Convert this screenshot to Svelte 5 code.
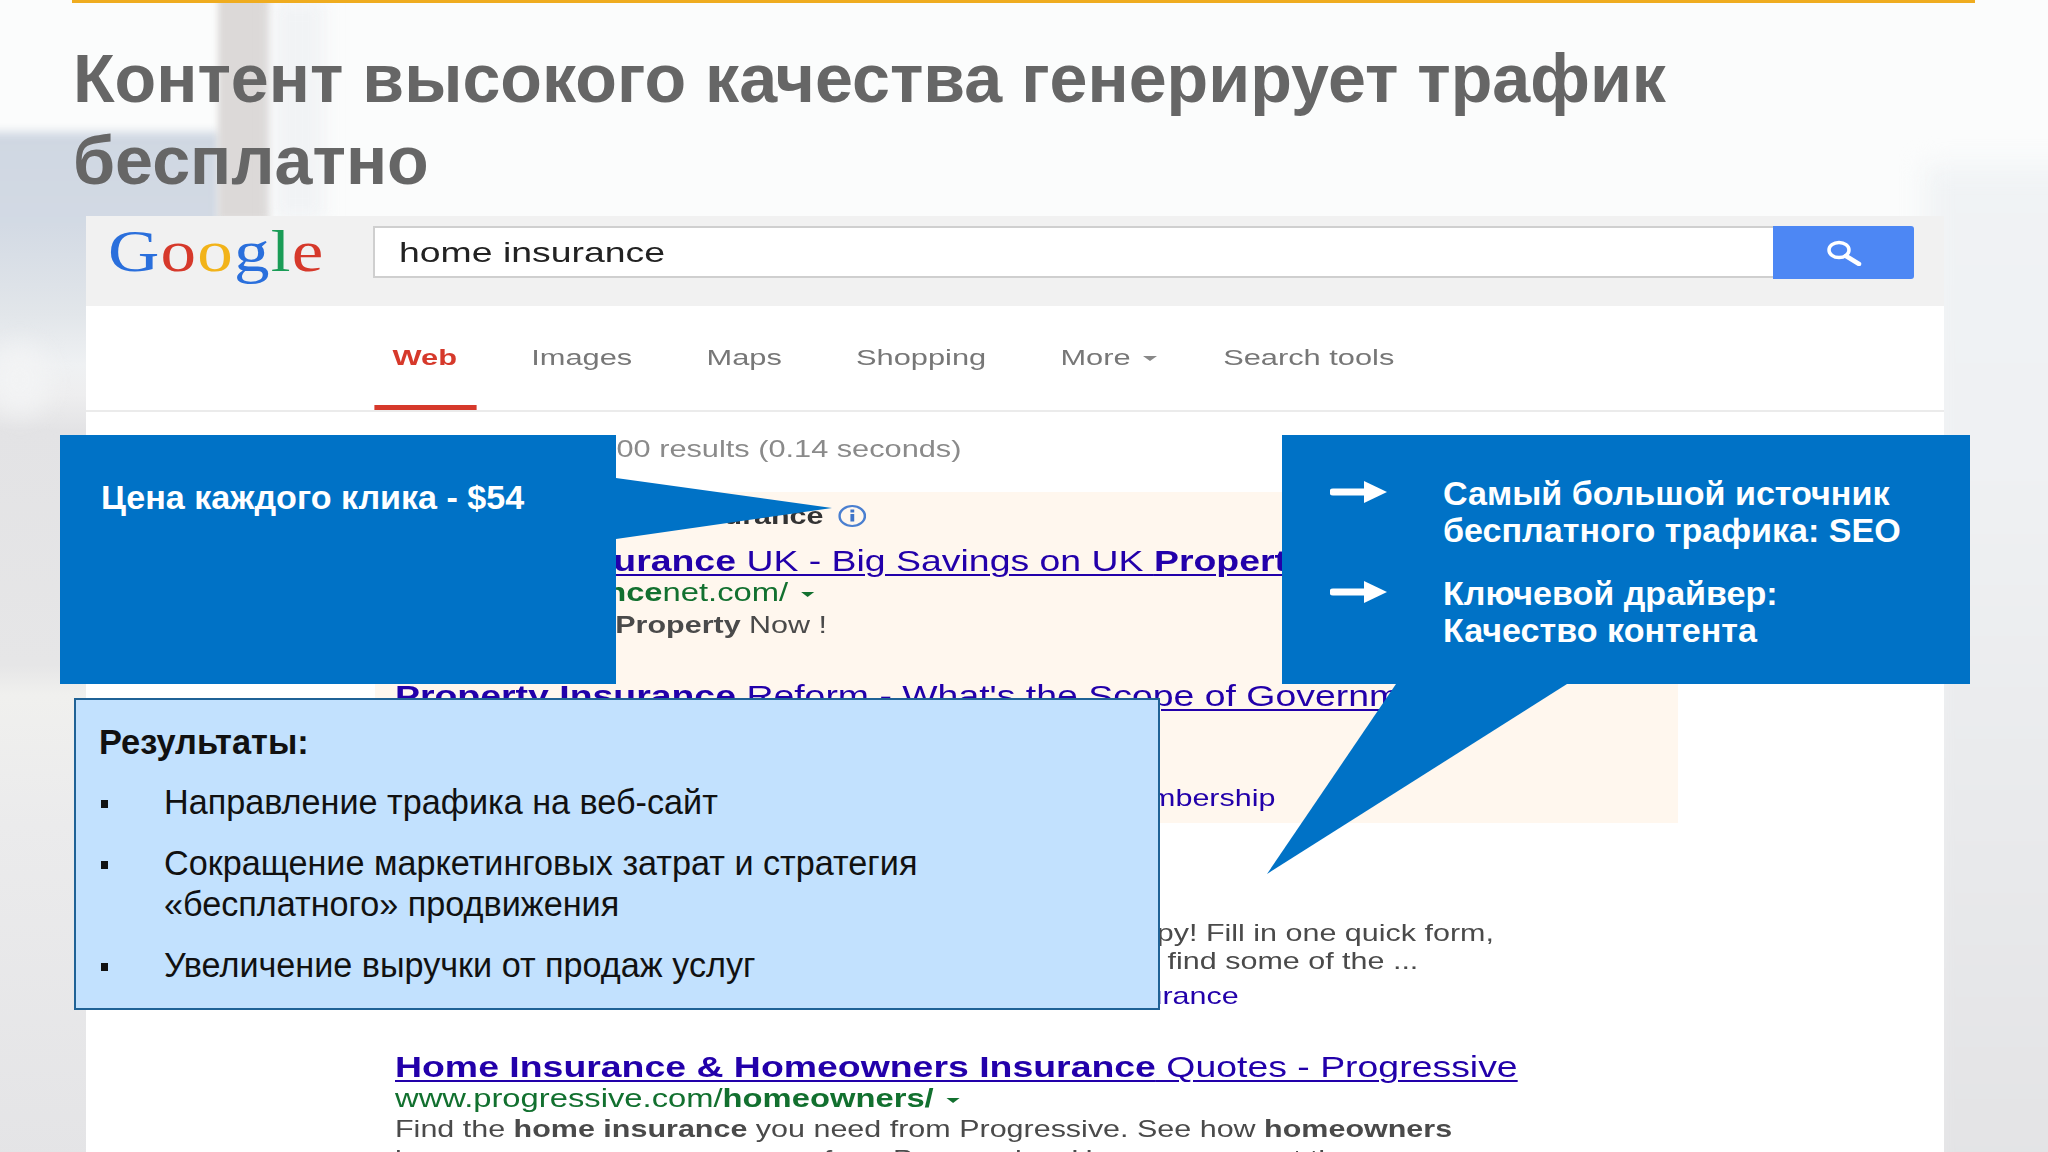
<script>
  const tabs = ['Images', 'Maps', 'Shopping'];
  const results = [
    'Направление трафика на веб-сайт',
    'Сокращение маркетинговых затрат и стратегия «бесплатного» продвижения',
    'Увеличение выручки от продаж услуг'
  ];
</script>

<div class="slide">
  <div class="photo">
    <span class="block"></span>
    <span class="pillar"></span>
    <span class="glow"></span>
    <span class="side"></span>
    <span class="blob"></span>
    <span class="right"></span>
  </div>

  <div class="rule"></div>
  <h1>Контент высокого качества генерирует трафик<br />бесплатно</h1>

  <div class="shot">
    <div class="masthead">
      <div class="logo">
        <span class="word"><span class="blue">G</span><span class="red">o</span><span class="yellow">o</span><span class="blue">g</span><span class="green">l</span><span class="red">e</span></span>
      </div>
      <div class="query"><span>home insurance</span></div>
      <div class="go">
        <svg width="36" height="26" viewBox="0 0 36 26">
          <ellipse cx="13" cy="10" rx="10" ry="7.5" fill="none" stroke="#fff" stroke-width="3.5" />
          <path d="M20 16 L33 24" stroke="#fff" stroke-width="4.5" stroke-linecap="round" />
        </svg>
      </div>
    </div>

    <nav class="tabs">
      <div class="tab-row">
        <span class="tab active">Web</span>
        {#each tabs as t}
          <span class="tab">{t}</span>
        {/each}
        <span class="tab">More <i class="caret gray"></i></span>
        <span class="tab last">Search tools</span>
      </div>
    </nav>

    <div class="stats">About 120,000,000 results (0.14 seconds)</div>

    <div class="ads">
      <div class="col">
        <div class="line snip adlabel"><b>Ad related to home insurance</b>
          <svg class="info" width="22" height="26" viewBox="0 0 22 26">
            <ellipse cx="11" cy="13" rx="10" ry="10" fill="none" stroke="#4a7fd0" stroke-width="2" />
            <rect x="9.6" y="11" width="3" height="7.5" fill="#3f74c8" />
            <rect x="9.6" y="6.5" width="3" height="3" fill="#3f74c8" />
          </svg>
        </div>
        <div class="line title"><a><b>Property Insurance</b> UK - Big Savings on UK <b>Property Insurance</b></a></div>
        <div class="line url">www.uk<b>insurance</b>net.com/ <i class="caret"></i></div>
        <div class="line snip">Save Money on <b>Property</b> Now !</div>
        <div class="line title second"><a><b>Property Insurance</b> Reform - What's the Scope of Government</a></div>
        <div class="line url">www.rstreet.org/<b>insurance</b>/ <i class="caret"></i></div>
        <div class="line snip">Join the debate on <b>property insurance</b> reform today</div>
        <div class="line link">Sign Up Today for a Free Year of R Street Insurance Membership</div>
      </div>
    </div>

    <div class="col organic">
      <div class="line title"><a><b>Home Insurance</b> Quotes</a></div>
      <div class="line snip first">Compare UK <b>home insurance</b> and save money. Be happy! Fill in one quick form,</div>
      <div class="line snip tight">then compare cheap quotes from insurers and you might find some of the ...</div>
      <div class="line link sub">Cheap UK Car Insurance - Travel Insurance - Home Insurance</div>
      <div class="line title second"><a><b>Home Insurance &amp; Homeowners Insurance</b> Quotes - Progressive</a></div>
      <div class="line url">www.progressive.com/<b>homeowners/</b> <i class="caret"></i></div>
      <div class="line snip close">Find the <b>home insurance</b> you need from Progressive. See how <b>homeowners</b></div>
      <div class="line snip next">insurance can save you money from Progressive. Homeowners get the coverage</div>
    </div>
  </div>

  <div class="panel">
    <h2>Результаты:</h2>
    <ul>
      {#each results as r}
        <li>{r}</li>
      {/each}
    </ul>
  </div>

  <div class="callout cost">
    <p>Цена каждого клика - $54</p>
    <svg class="tail" width="220" height="66" viewBox="0 0 220 66">
      <polygon points="0,2 216,32 0,63" fill="#0072c6" />
    </svg>
  </div>

  <div class="callout source">
    <div class="point">
      <svg width="58" height="24" viewBox="0 0 58 24">
        <path d="M3 12 H36" stroke="#fff" stroke-width="7" stroke-linecap="round" />
        <polygon points="34,1 57,12 34,23" fill="#fff" />
      </svg>
      <p>Самый большой источник<br />бесплатного трафика: SEO</p>
    </div>
    <div class="point">
      <svg width="58" height="24" viewBox="0 0 58 24">
        <path d="M3 12 H36" stroke="#fff" stroke-width="7" stroke-linecap="round" />
        <polygon points="34,1 57,12 34,23" fill="#fff" />
      </svg>
      <p>Ключевой драйвер:<br />Качество контента</p>
    </div>
    <svg class="tail" width="304" height="192" viewBox="0 0 304 192">
      <polygon points="129,0 300,0 0,190" fill="#0072c6" />
    </svg>
  </div>
</div>

<style>
  :global(body) {
    margin: 0;
    background: #fff;
  }

  .slide {
    position: relative;
    width: 2048px;
    height: 1152px;
    overflow: hidden;
    background: #fbfcfc;
    font-family: "Liberation Sans", Arial, sans-serif;
  }

  .photo {
    position: absolute;
    inset: 0;
    overflow: hidden;
  }
  .photo span {
    position: absolute;
    display: block;
  }
  .pillar {
    left: 218px;
    top: -10px;
    width: 52px;
    height: 230px;
    background: #dcd9d8;
    filter: blur(3px);
  }
  .glow {
    left: 274px;
    top: 0;
    width: 50px;
    height: 220px;
    background: #f1f3f5;
    filter: blur(9px);
  }
  .block {
    left: -20px;
    top: 132px;
    width: 240px;
    height: 110px;
    background: linear-gradient(#cfd7e2, #d3dae4);
    filter: blur(5px);
  }
  .side {
    left: -20px;
    top: 225px;
    width: 106px;
    height: 940px;
    background: linear-gradient(#d3dae4 0, #e2e6ea 90px, #eff1f3 140px, #eeeeef 170px, #e3e3e5 205px, #e6e6e7 440px, #f0f0ee 470px, #ebebec 600px, #e4e4e6 100%);
  }
  .blob {
    left: -10px;
    top: 345px;
    width: 60px;
    height: 70px;
    border-radius: 50%;
    background: #f2f3f4;
    filter: blur(12px);
  }
  .right {
    left: 1925px;
    top: 165px;
    width: 160px;
    height: 1020px;
    background: linear-gradient(#f0f3f5, #eff1f3 300px, #e3e3e5 100%);
    filter: blur(12px);
  }

  .rule {
    position: relative;
    height: 3px;
    margin: 0 73px 0 72px;
    background: #efac1f;
  }

  h1 {
    position: relative;
    margin: 34px 0 15px 73px;
    font-size: 68.2px;
    line-height: 82px;
    font-weight: 700;
    color: #666;
  }

  .shot {
    position: relative;
    width: 1858px;
    height: 936px;
    margin-left: 86px;
    background: #fff;
    overflow: hidden;
    filter: blur(0.6px);
  }

  .masthead {
    display: flex;
    align-items: flex-start;
    height: 90px;
    background: #f1f1f1;
  }
  .logo {
    width: 287px;
    padding-left: 22px;
    box-sizing: border-box;
    font-family: "Liberation Serif", serif;
    font-size: 60px;
    line-height: 71px;
    letter-spacing: 1px;
    white-space: nowrap;
  }
  .word {
    display: inline-block;
    transform: scaleX(1.185);
    transform-origin: 0 0;
  }
  .blue { color: #2a6fdc; }
  .red { color: #d6392b; }
  .yellow { color: #f2b319; }
  .green { color: #1a9c56; }

  .query {
    width: 1400px;
    height: 52px;
    margin-top: 10px;
    box-sizing: border-box;
    padding-left: 24px;
    background: #fff;
    border: 2px solid #cfcfcf;
    border-right: 0;
    font-size: 28px;
    line-height: 50px;
    color: #222;
  }
  .query span {
    display: inline-block;
    transform: scaleX(1.335);
    transform-origin: 0 0;
  }
  .go {
    display: flex;
    align-items: center;
    justify-content: center;
    width: 141px;
    height: 53px;
    margin-top: 10px;
    background: #4d87f4;
    border-radius: 0 3px 3px 0;
  }

  .tabs {
    height: 104px;
    border-bottom: 2px solid #ebebeb;
  }
  .tab-row {
    display: flex;
    width: 1200px;
    padding-left: 219px;
    box-sizing: border-box;
    transform: scaleX(1.4);
    transform-origin: 0 0;
    font-size: 22px;
    line-height: 104px;
    color: #777;
  }
  .tab {
    position: relative;
    margin-left: 53px;
    white-space: nowrap;
  }
  .tab.active {
    margin-left: 0;
    font-weight: 700;
    color: #d6392b;
  }
  .tab.active::after {
    content: "";
    position: absolute;
    left: -13px;
    right: -14px;
    bottom: 0;
    height: 5px;
    background: #d6392b;
  }
  .tab.last {
    margin-left: 47px;
  }

  .caret {
    display: inline-block;
    margin-left: 3px;
    vertical-align: 4px;
    border-top: 5px solid #12702f;
    border-left: 5px solid transparent;
    border-right: 5px solid transparent;
  }
  .caret.gray {
    border-top-color: #888;
  }

  .stats {
    height: 30px;
    margin-top: 22px;
    margin-left: 305px;
    font-size: 24px;
    line-height: 30px;
    color: #8a8a8a;
    white-space: nowrap;
    transform: scaleX(1.28);
    transform-origin: 0 0;
  }

  .ads {
    width: 1303px;
    margin-top: 28px;
    margin-left: 289px;
    padding: 6px 0 10px;
    background: #fff7ee;
  }
  .col {
    width: 1200px;
    margin-left: 20px;
  }
  .organic {
    margin-left: 309px;
    margin-top: 47px;
  }

  .line {
    height: 30px;
    line-height: 30px;
    white-space: nowrap;
    font-size: 24px;
    color: #4a4a4a;
    transform-origin: 0 0;
  }
  .adlabel b {
    color: #333;
  }
  .info {
    position: relative;
    top: 5px;
    margin-left: 5px;
  }
  .title {
    margin-top: 18px;
    font-size: 29px;
    color: #2200aa;
    transform: scaleX(1.29);
  }
  .title a {
    text-decoration: underline;
    text-decoration-thickness: 2px;
    text-underline-offset: 3px;
  }
  .title.second {
    margin-top: 41px;
  }
  .organic .title:first-child {
    margin-top: 0;
  }
  .url {
    margin-top: 1px;
    font-size: 25px;
    color: #12702f;
    transform: scaleX(1.31);
  }
  .snip {
    margin-top: 3px;
    transform: scaleX(1.27);
  }
  .snip.adlabel {
    margin-top: 0;
  }
  .snip.first {
    margin-top: 18px;
  }
  .snip.tight {
    margin-top: -2px;
  }
  .snip.close {
    margin-top: 1px;
  }
  .snip.next {
    margin-top: 0;
  }
  .link {
    margin-top: 8px;
    color: #2200aa;
    transform: scaleX(1.27);
  }
  .link.sub {
    margin-top: 5px;
  }

  .panel {
    position: absolute;
    left: 74px;
    top: 698px;
    width: 1086px;
    height: 312px;
    box-sizing: border-box;
    padding: 22px 23px;
    background: #c2e1fe;
    border: 2px solid #1f6296;
    color: #111;
  }
  h2 {
    margin: 0;
    font-size: 34.4px;
    line-height: 40px;
    font-weight: 700;
  }
  ul {
    list-style: none;
    margin: 0;
    padding: 0 0 0 65px;
  }
  li {
    position: relative;
    margin-top: 20px;
    width: 780px;
    font-size: 34.2px;
    line-height: 41px;
  }
  li::before {
    content: "";
    position: absolute;
    left: -63px;
    top: 18px;
    width: 7px;
    height: 8px;
    background: #111;
  }

  .callout {
    position: absolute;
    top: 435px;
    height: 249px;
    box-sizing: border-box;
    background: #0072c6;
    color: #fff;
    font-size: 34.1px;
    font-weight: 700;
    line-height: 37px;
  }
  .callout p {
    margin: 0;
  }
  .tail {
    position: absolute;
    display: block;
  }
  .cost {
    left: 60px;
    width: 556px;
    padding: 44px 0 0 41px;
  }
  .cost .tail {
    left: 556px;
    top: 41px;
  }
  .source {
    left: 1282px;
    width: 688px;
    padding: 40px 0 0 48px;
  }
  .point {
    display: flex;
    gap: 55px;
    margin-bottom: 26px;
  }
  .point svg {
    flex: none;
    margin-top: 5px;
  }
  .source .tail {
    left: -15px;
    top: 249px;
  }
</style>
